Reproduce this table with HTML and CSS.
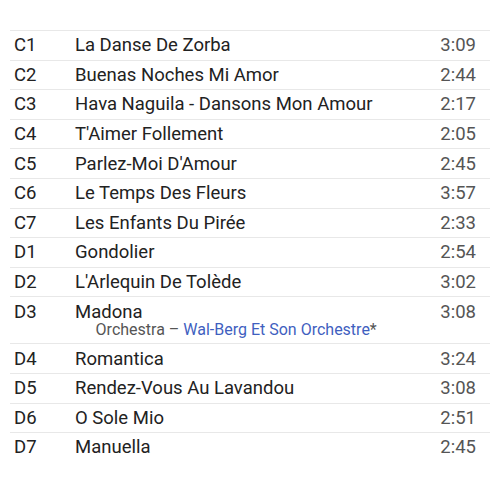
FILE: index.html
```html
<!DOCTYPE html>
<html>
<head>
<meta charset="utf-8">
<link rel="stylesheet" href="styles.css">
</head>
<body>
<table class="tracklist">
  <tbody>
    <tr><td class="pos">C1</td><td class="title">La Danse De Zorba</td><td class="dur">3:09</td></tr>
    <tr><td class="pos">C2</td><td class="title">Buenas Noches Mi Amor</td><td class="dur">2:44</td></tr>
    <tr><td class="pos">C3</td><td class="title">Hava Naguila - Dansons Mon Amour</td><td class="dur">2:17</td></tr>
    <tr><td class="pos">C4</td><td class="title">T'Aimer Follement</td><td class="dur">2:05</td></tr>
    <tr><td class="pos">C5</td><td class="title">Parlez-Moi D'Amour</td><td class="dur">2:45</td></tr>
    <tr><td class="pos">C6</td><td class="title">Le Temps Des Fleurs</td><td class="dur">3:57</td></tr>
    <tr><td class="pos">C7</td><td class="title">Les Enfants Du Pirée</td><td class="dur">2:33</td></tr>
    <tr><td class="pos">D1</td><td class="title">Gondolier</td><td class="dur">2:54</td></tr>
    <tr><td class="pos">D2</td><td class="title">L'Arlequin De Tolède</td><td class="dur">3:02</td></tr>
    <tr><td class="pos">D3</td><td class="title">Madona<div class="credit">Orchestra – <a class="artist" href="#">Wal-Berg Et Son Orchestre</a>*</div></td><td class="dur">3:08</td></tr>
    <tr><td class="pos">D4</td><td class="title">Romantica</td><td class="dur">3:24</td></tr>
    <tr><td class="pos">D5</td><td class="title">Rendez-Vous Au Lavandou</td><td class="dur">3:08</td></tr>
    <tr><td class="pos">D6</td><td class="title">O Sole Mio</td><td class="dur">2:51</td></tr>
    <tr class="last"><td class="pos">D7</td><td class="title">Manuella</td><td class="dur">2:45</td></tr>
  </tbody>
</table>
</body>
</html>
```
FILE: styles.css
```css
html, body {
  margin: 0;
  padding: 0;
  background: #fff;
}
body {
  padding: 30px 10px 0 10px;
  font-family: Roboto, "Liberation Sans", sans-serif;
  color: #222;
}
.tracklist {
  width: 480px;
  border-collapse: collapse;
  font-size: 18.5px;
  line-height: 21px;
}
.tracklist td {
  border-top: 1px solid #e8e8e8;
  padding: 4.3px 0 3.3px 0;
  vertical-align: top;
}
.tracklist td.pos {
  width: 61px;
  padding-left: 4px;
}
.title {
  color: #222;
}
.tracklist td.dur {
  text-align: right;
  padding-right: 14px;
  color: #555;
}
.credit {
  font-size: 16px;
  line-height: 16px;
  margin-top: -1px;
  color: #555;
  padding: 0 0 2.4px 20.6px;
}
.artist {
  color: #3f5fbf;
  text-decoration: none;
}
```
